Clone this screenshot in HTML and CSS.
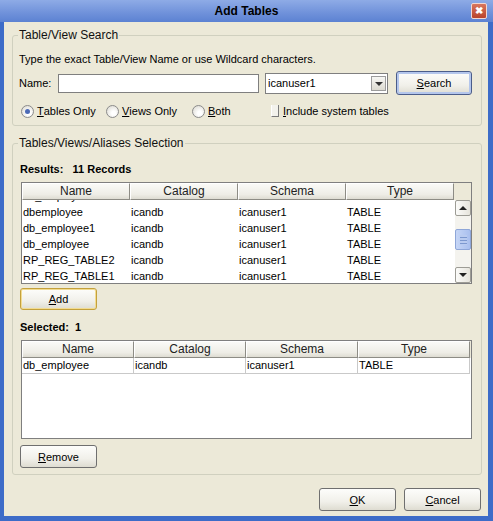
FILE: index.html
```html
<!DOCTYPE html>
<html lang="en">
<head>
    <meta charset="UTF-8">
    <title>Add Tables</title>
    <link rel="stylesheet" href="styles.css">
</head>
<body>
    <div class="window">
        <div class="titlebar">
            <span class="title">Add Tables</span>
            <span class="close">&#10006;</span>
        </div>

        <div class="content">
            <fieldset class="group searchGroup">
                <legend>Table/View Search</legend>
                <div class="hint">Type the exact Table/View Name or use Wildcard characters.</div>

                <div class="nameRow">
                    <span class="label">Name:</span>
                    <span class="textbox"></span>
                    <span class="combo">
                        <span class="comboText">icanuser1</span>
                        <span class="comboArrow"></span>
                    </span>
                    <span class="btn searchBtn"><u>S</u>earch</span>
                </div>

                <div class="optRow">
                    <span class="opt"><span class="radio checked"></span><u>T</u>ables Only</span>
                    <span class="opt"><span class="radio"></span><u>V</u>iews Only</span>
                    <span class="opt"><span class="radio"></span><u>B</u>oth</span>
                    <span class="opt optCheck"><span class="check"></span><u>I</u>nclude system tables</span>
                </div>
            </fieldset>

            <fieldset class="group selGroup">
                <legend>Tables/Views/Aliases Selection</legend>
                <div class="caption">Results:&nbsp;&nbsp; 11 Records</div>

                <div class="grid results">
                    <div class="head">
                        <span class="hcell">Name</span>
                        <span class="hcell">Catalog</span>
                        <span class="hcell">Schema</span>
                        <span class="hcell">Type</span>
                    </div>
                    <div class="bodyWrap">
                        <div class="rows">
                            <div class="row"><span>db_employee2</span><span>icandb</span><span>icanuser1</span><span>TABLE</span></div>
                            <div class="row"><span>dbemployee</span><span>icandb</span><span>icanuser1</span><span>TABLE</span></div>
                            <div class="row"><span>db_employee1</span><span>icandb</span><span>icanuser1</span><span>TABLE</span></div>
                            <div class="row"><span>db_employee</span><span>icandb</span><span>icanuser1</span><span>TABLE</span></div>
                            <div class="row"><span>RP_REG_TABLE2</span><span>icandb</span><span>icanuser1</span><span>TABLE</span></div>
                            <div class="row"><span>RP_REG_TABLE1</span><span>icandb</span><span>icanuser1</span><span>TABLE</span></div>
                        </div>
                        <div class="vscroll">
                            <span class="sbtn up"></span>
                            <span class="track">
                                <span class="thumb"></span>
                            </span>
                            <span class="sbtn down"></span>
                        </div>
                    </div>
                </div>

                <div class="btn blockBtn addBtn"><u>A</u>dd</div>

                <div class="caption selCaption">Selected:&nbsp;&nbsp;1</div>

                <div class="grid selected">
                    <div class="head">
                        <span class="hcell">Name</span>
                        <span class="hcell">Catalog</span>
                        <span class="hcell">Schema</span>
                        <span class="hcell">Type</span>
                    </div>
                    <div class="selBody">
                        <div class="row lined"><span>db_employee</span><span>icandb</span><span>icanuser1</span><span>TABLE</span></div>
                    </div>
                </div>

                <div class="btn blockBtn removeBtn"><u>R</u>emove</div>
            </fieldset>

            <div class="footer">
                <span class="btn"><u>O</u>K</span>
                <span class="btn"><u>C</u>ancel</span>
            </div>
        </div>
    </div>
</body>
</html>
```

FILE: styles.css
```css
body {
    margin: 0;
    font-family: "Liberation Sans", Arial, sans-serif;
    font-size: 11px;
    color: #000;
}

.window {
    width: 493px;
    height: 521px;
    box-sizing: border-box;
    display: flex;
    flex-direction: column;
    background-color: #ece9d8;
    border-left: 4px solid #3d6cc8;
    border-right: 5px solid #3d6cc8;
    border-bottom: 5px solid #3d6cc8;
}

.titlebar {
    height: 22px;
    margin: 0 -5px 0 -4px;
    display: flex;
    align-items: center;
    justify-content: center;
    position: relative;
    background: linear-gradient(#8eabe6, #6f91da 60%, #5c82d2);
}
.title {
    font-size: 12px;
    font-weight: bold;
}
.close {
    position: absolute;
    right: 6px;
    top: 3px;
    width: 16px;
    height: 16px;
    box-sizing: border-box;
    border: 1px solid #f2d6d0;
    border-radius: 2px;
    background: linear-gradient(#d8765e, #b9432c);
    color: #fff;
    font-size: 10px;
    line-height: 14px;
    text-align: center;
    font-weight: bold;
}

.content {
    flex: 1;
    padding: 0 6px 0 8px;
}

.group {
    margin: 0;
    border: 1px solid #d0d0bf;
    border-radius: 3px;
    padding: 0 6px;
}
.group legend {
    font-size: 12px;
    padding: 0 1px;
    margin-left: -1px;
    line-height: 14px;
    color: #111;
}

.searchGroup {
    margin-top: 6px;
    height: 98px;
    box-sizing: border-box;
    padding-top: 10px;
}
.hint {
    line-height: 14px;
}
.nameRow {
    display: flex;
    align-items: center;
    margin-top: 5px;
    height: 24px;
}
.label {
    width: 39px;
}
.textbox {
    width: 199px;
    height: 17px;
    background: #fff;
    border: 1px solid #7f7f7f;
}
.combo {
    margin-left: 6px;
    width: 121px;
    height: 19px;
    border: 1px solid #7f7f7f;
    background: #fff;
    display: flex;
    align-items: center;
    justify-content: space-between;
}
.comboText {
    padding-left: 2px;
}
.comboArrow {
    width: 15px;
    height: 15px;
    margin-right: 1px;
    box-sizing: border-box;
    border: 1px solid #9c9c9c;
    background: linear-gradient(#f7f7f4, #dcdad0);
    position: relative;
}
.comboArrow::after {
    content: "";
    position: absolute;
    left: 3px;
    top: 5px;
    border-left: 4px solid transparent;
    border-right: 4px solid transparent;
    border-top: 4px solid #333;
}

.btn {
    display: inline-flex;
    align-items: center;
    justify-content: center;
    box-sizing: border-box;
    width: 77px;
    height: 23px;
    border: 1px solid #6f6f6f;
    border-radius: 3px;
    background: linear-gradient(#fdfdfb, #f1f0ea 60%, #dedcd1);
}
.blockBtn {
    display: flex;
    margin-left: 1px;
}
.searchBtn {
    margin-left: 8px;
    width: 76px;
    height: 24px;
    border-color: #4b5d8a;
    box-shadow: inset 0 0 0 2px #b4c6ec;
}

.optRow {
    display: flex;
    align-items: center;
    margin-top: 9px;
    height: 14px;
}
.opt {
    display: inline-flex;
    align-items: center;
    white-space: nowrap;
}
.opt:nth-child(1) {
    width: 85px;
}
.opt:nth-child(2) {
    width: 86px;
}
.opt:nth-child(3) {
    width: 79px;
}
.radio {
    width: 11px;
    height: 11px;
    border: 1px solid #8b8b8b;
    border-radius: 50%;
    margin: 0 3px 0 2px;
    background: radial-gradient(circle at 60% 65%, #ffffff 20%, #dcdad2 90%);
    position: relative;
}
.radio.checked::after {
    content: "";
    position: absolute;
    left: 3px;
    top: 3px;
    width: 5px;
    height: 5px;
    border-radius: 50%;
    background: #4c6ab6;
}
.check {
    width: 6px;
    height: 11px;
    margin: 0 4px 0 2px;
    border-right: 1px solid #7a7a7a;
    border-bottom: 1px solid #7a7a7a;
    border-left: 1px solid #fff;
    background: #f3f2ec;
}

.selGroup {
    margin-top: 10px;
    height: 339px;
    box-sizing: border-box;
    padding-top: 12px;
}
.caption {
    font-weight: bold;
    line-height: 14px;
    margin-left: 1px;
}

.grid {
    margin: 6px 0 0 2px;
    width: 451px;
    box-sizing: border-box;
    border: 1px solid #7f7f7f;
    background: #fff;
}
.head {
    display: flex;
    background: #ece9d8;
}
.hcell {
    box-sizing: border-box;
    height: 17px;
    line-height: 15px;
    font-size: 12px;
    text-align: center;
    border: 1px solid;
    border-color: #fff #8d8c85 #8d8c85 #fff;
    background: linear-gradient(#fafaf7, #eeede6 70%, #dedcd2);
    color: #222;
}
.results .hcell {
    width: 108px;
}
.results .head {
    padding-right: 16px;
}
.bodyWrap {
    display: flex;
    height: 83px;
    overflow: hidden;
}
.rows {
    flex: 1;
    margin-top: -12px;
}
.row {
    display: flex;
    height: 16px;
    line-height: 16px;
}
.row span {
    width: 108px;
    padding-left: 1px;
    box-sizing: border-box;
    white-space: nowrap;
}

.vscroll {
    width: 16px;
    display: flex;
    flex-direction: column;
    background: #f4f3ee;
}
.sbtn {
    height: 16px;
    box-sizing: border-box;
    border: 1px solid #9d9c95;
    border-radius: 2px;
    background: linear-gradient(90deg, #fbfbf9, #e6e4dc);
    position: relative;
}
.sbtn::after {
    content: "";
    position: absolute;
    left: 3px;
    border-left: 4px solid transparent;
    border-right: 4px solid transparent;
}
.sbtn.up::after {
    top: 5px;
    border-bottom: 4px solid #222;
}
.sbtn.down::after {
    top: 5px;
    border-top: 4px solid #222;
}
.track {
    flex: 1;
    padding-top: 13px;
}
.thumb {
    display: block;
    height: 21px;
    box-sizing: border-box;
    border: 1px solid #8ea6d8;
    border-radius: 2px;
    background:
        repeating-linear-gradient(#b9cbf0 0 2px, #7c98cf 2px 3px) center / 7px 10px no-repeat,
        linear-gradient(90deg, #c6d6f6, #a9bfee);
}

.addBtn {
    margin-top: 4px;
    height: 22px;
    border-color: #c4a13c;
    box-shadow: inset 0 0 0 1px #f2dc92;
}
.selCaption {
    margin-top: 10px;
}

.selected .hcell {
    width: 112px;
}
.selected .head {
    padding-right: 1px;
}
.selBody {
    height: 80px;
}
.row.lined span {
    width: 112px;
    border-right: 1px solid #c9c9c9;
    border-bottom: 1px solid #c9c9c9;
    line-height: 15px;
}

.removeBtn {
    margin-top: 6px;
}

.footer {
    display: flex;
    justify-content: flex-end;
    gap: 8px;
    margin-top: 13px;
    padding-right: 1px;
}
```
